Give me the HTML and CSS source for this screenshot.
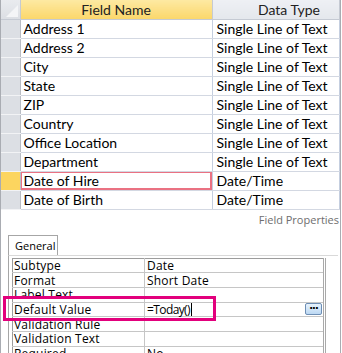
FILE: index.html
```html
<!DOCTYPE html>
<html>
<head>
	<title>Table Design</title>
	<link rel="stylesheet" href="styles.css">
</head>
<body>

	<div id="boxScreen">

		<table id="tblDesign">
			<colgroup>
				<col class="colSelector">
				<col class="colName">
				<col class="colType">
			</colgroup>
			<thead>
				<tr>
					<th class="thCorner"><span class="cornerMark"></span></th>
					<th class="thName">Field Name</th>
					<th class="thType">Data Type</th>
				</tr>
			</thead>
			<tbody>
				<tr><td class="tdSelector"></td><td class="tdName">Address 1</td><td class="tdType">Single Line of Text</td></tr>
				<tr><td class="tdSelector"></td><td class="tdName">Address 2</td><td class="tdType">Single Line of Text</td></tr>
				<tr><td class="tdSelector"></td><td class="tdName">City</td><td class="tdType">Single Line of Text</td></tr>
				<tr><td class="tdSelector"></td><td class="tdName">State</td><td class="tdType">Single Line of Text</td></tr>
				<tr><td class="tdSelector"></td><td class="tdName">ZIP</td><td class="tdType">Single Line of Text</td></tr>
				<tr><td class="tdSelector"></td><td class="tdName">Country</td><td class="tdType">Single Line of Text</td></tr>
				<tr><td class="tdSelector"></td><td class="tdName">Office Location</td><td class="tdType">Single Line of Text</td></tr>
				<tr><td class="tdSelector"></td><td class="tdName">Department</td><td class="tdType">Single Line of Text</td></tr>
				<tr class="rowCurrent"><td class="tdSelector"></td><td class="tdName"><div class="boxCurrent">Date of Hire</div></td><td class="tdType">Date/Time</td></tr>
				<tr><td class="tdSelector"></td><td class="tdName">Date of Birth</td><td class="tdType">Date/Time</td></tr>
			</tbody>
		</table>

		<div id="boxProperties">
			<div id="lblProperties">Field Properties</div>

			<div id="boxTabs">
				<div class="tab">General</div>
			</div>

			<div id="boxPanel">
				<table id="tblProps">
					<tr><td class="propName">Subtype</td><td class="propValue">Date</td></tr>
					<tr><td class="propName">Format</td><td class="propValue">Short Date</td></tr>
					<tr><td class="propName">Label Text</td><td class="propValue"></td></tr>
					<tr>
						<td class="propName">Default Value</td>
						<td class="propValue">
							<div class="boxEdit">
								<span class="lblEdit">=Today()<span class="caret"></span></span>
								<button class="btnBuild">&middot;&middot;&middot;</button>
							</div>
						</td>
					</tr>
					<tr><td class="propName">Validation Rule</td><td class="propValue"></td></tr>
					<tr><td class="propName">Validation Text</td><td class="propValue"></td></tr>
					<tr><td class="propName">Required</td><td class="propValue">No</td></tr>
				</table>
			</div>

			<!-- callout drawn over the Default Value row -->
			<div class="callout"></div>
		</div>

	</div>

</body>
</html>
```

FILE: styles.css
```css
*{
	margin: 0px;
	padding: 0px;
	box-sizing: border-box;
}

body{
	width: 342px;
	height: 353px;
	overflow: hidden;
	background-color: white;
	font-family: "Lato", "Open Sans", sans-serif;
	color: black;
}

#boxScreen{
	width: 341px;
	height: 353px;
	border-left: 1px solid #a9acb2;
	border-right: 1px solid #a9acb2;
}

/* top grid */
#tblDesign{
	width: 100%;
	border-collapse: collapse;
	table-layout: fixed;
	font-size: 14px;
}
.colSelector{ width: 19px; }
.colName{ width: 192px; }

#tblDesign th{
	height: 19px;
	font-weight: normal;
	border-right: 1px solid #c5cad3;
	border-bottom: 1px solid #c5cad3;
	padding: 0px;
	color: #222;
}
.thCorner{
	position: relative;
	background: linear-gradient(#e9ebef, #dcdfe4);
}
.cornerMark{
	position: absolute;
	right: 2px;
	bottom: 2px;
	width: 0px;
	height: 0px;
	border-left: 12px solid transparent;
	border-bottom: 12px solid #f4f5f7;
}
.thName{
	background: linear-gradient(#fde9a2, #fbd76b);
	text-align: center;
}
.thType{
	background: linear-gradient(#eef0f4, #e4e7ec);
	text-align: right;
	padding-right: 19px !important;
}

#tblDesign td{
	height: 19px;
	border-bottom: 1px solid #d3d8e2;
	border-right: 1px solid #c5cfe0;
	white-space: nowrap;
	line-height: 18px;
}
.tdSelector{
	background-color: #dcdfe4;
	border-bottom: 1px solid #f2f3f5 !important;
	border-right: 1px solid #b9bdc4 !important;
}
.tdName{
	padding-left: 3px;
}
.tdType{
	padding-left: 4px;
}
.rowCurrent .tdSelector{
	background-color: #fcd55f;
}
.rowCurrent .tdName{
	padding: 0px;
}
.boxCurrent{
	height: 19px;
	margin-top: -1px;
	margin-left: -1px;
	border: 2px solid #ea7182;
	padding-left: 2px;
	line-height: 16px;
}

/* field properties */
#boxProperties{
	position: relative;
	height: 144px;
}
#lblProperties{
	text-align: right;
	font-family: "Open Sans", sans-serif;
	font-size: 11px;
	color: #6e6e6e;
	padding-right: 1px;
	padding-top: 2px;
	height: 25px;
	line-height: 16px;
}

#boxTabs{
	display: flex;
	padding-left: 7px;
}
.tab{
	width: 50px;
	height: 20px;
	border: 1px solid #a6a6a6;
	border-bottom: none;
	font-family: "Open Sans", sans-serif;
	font-size: 11px;
	line-height: 19px;
	padding-left: 6px;
	background-color: white;
}

#boxPanel{
	margin-left: 7px;
	margin-right: 2px;
	border-left: 1px solid #a6a6a6;
	border-top: 1px solid #d9d9d9;
	padding: 2px 0px 0px 3px;
	height: 100px;
}

#tblProps{
	width: 314px;
	border-collapse: collapse;
	table-layout: fixed;
	font-family: "Open Sans", sans-serif;
	font-size: 12px;
	letter-spacing: 0.2px;
	border: 1px solid #9c9c9c;
	border-right: 3px double #a9a9a9;
}
#tblProps td{
	height: 14.7px;
	line-height: 13px;
	border-bottom: 1px solid #c6c6c6;
	white-space: nowrap;
	padding-left: 1px;
}
.propName{
	width: 132px;
	border-right: 1px solid #c6c6c6;
}
.propValue{
	padding-left: 2px !important;
}

.boxEdit{
	display: flex;
	align-items: center;
	justify-content: space-between;
	padding-right: 1px;
}
.lblEdit{
	letter-spacing: -0.6px;
}
.caret{
	display: inline-block;
	width: 1px;
	height: 13px;
	margin-left: 1px;
	background-color: black;
	vertical-align: -2px;
}
.btnBuild{
	width: 17px;
	height: 12px;
	border: 1px solid #6e8fb5;
	border-radius: 2px;
	background: linear-gradient(#e8f3fd, #bcd8f3);
	font-size: 10px;
	font-weight: bold;
	line-height: 8px;
	color: black;
	font-family: "DejaVu Sans", sans-serif;
	letter-spacing: -1px;
}

.callout{
	position: absolute;
	left: 2px;
	top: 86px;
	width: 213px;
	height: 25px;
	border: 3px solid #e2007c;
}
```
